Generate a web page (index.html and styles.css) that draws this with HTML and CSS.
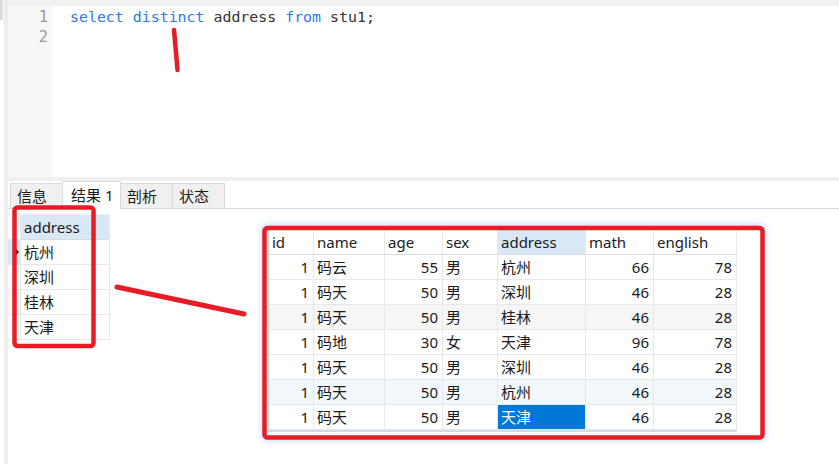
FILE: index.html
```html
<!DOCTYPE html>
<html lang="zh-CN">
<head>
<meta charset="utf-8">
<title>query</title>
<link rel="stylesheet" href="styles.css">
</head>
<body>
<div class="app">
  <div class="side"><div class="thumb"></div></div>
  <div class="main">
    <div class="topbar"></div>
    <div class="editor">
      <div class="gutter"><div class="ln">1</div><div class="ln">2</div></div>
      <div class="code">
        <div class="line"><span class="kw">select</span> <span class="kw">distinct</span> address <span class="kw">from</span> stu1;</div>
        <div class="line">&nbsp;</div>
      </div>
    </div>
    <div class="sep"></div>
    <div class="tabs">
      <div class="tab">信息</div>
      <div class="tab active">结果 1</div>
      <div class="tab">剖析</div>
      <div class="tab">状态</div>
    </div>
    <div class="results">
      <div class="grid small">
        <div class="c ind"></div><div class="c hd sel">address</div>
        <div class="c ind cur"><span class="tri"></span></div><div class="c">杭州</div>
        <div class="c ind"></div><div class="c">深圳</div>
        <div class="c ind alt"></div><div class="c">桂林</div>
        <div class="c ind"></div><div class="c">天津</div>
      </div>
    </div>
  </div>

  <div class="snap">
    <div class="grid big">
      <div class="c hd">id</div><div class="c hd">name</div><div class="c hd">age</div><div class="c hd">sex</div><div class="c hd sel">address</div><div class="c hd">math</div><div class="c hd">english</div>

      <div class="c n">1</div><div class="c">码云</div><div class="c n">55</div><div class="c">男</div><div class="c">杭州</div><div class="c n">66</div><div class="c n">78</div>

      <div class="c n">1</div><div class="c">码天</div><div class="c n">50</div><div class="c">男</div><div class="c">深圳</div><div class="c n">46</div><div class="c n">28</div>

      <div class="c n alt">1</div><div class="c alt">码天</div><div class="c n alt">50</div><div class="c alt">男</div><div class="c alt">桂林</div><div class="c n alt">46</div><div class="c n alt">28</div>

      <div class="c n">1</div><div class="c">码地</div><div class="c n">30</div><div class="c">女</div><div class="c">天津</div><div class="c n">96</div><div class="c n">78</div>

      <div class="c n">1</div><div class="c">码天</div><div class="c n">50</div><div class="c">男</div><div class="c">深圳</div><div class="c n">46</div><div class="c n">28</div>

      <div class="c n hov">1</div><div class="c hov">码天</div><div class="c n hov">50</div><div class="c hov">男</div><div class="c hov">杭州</div><div class="c n hov">46</div><div class="c n hov">28</div>

      <div class="c n">1</div><div class="c">码天</div><div class="c n">50</div><div class="c">男</div><div class="c picked">天津</div><div class="c n">46</div><div class="c n">28</div>
    </div>
  </div>

  <svg class="marks" width="839" height="464" viewBox="0 0 839 464">
    <line x1="174" y1="30" x2="177.5" y2="70" class="pen"/>
    <rect x="14.5" y="207.5" width="79" height="138.5" rx="3" class="pen"/>
    <line x1="117" y1="287" x2="244" y2="314" class="pen thick"/>
    <rect x="264.5" y="228" width="498" height="209.5" rx="3" class="pen"/>
  </svg>
</div>
</body>
</html>
```

FILE: styles.css
```css
html, body {
  margin: 0;
  padding: 0;
  background: #fff;
}

.app {
  position: relative;
  width: 839px;
  height: 464px;
  overflow: hidden;
  display: flex;
  font-family: "Noto Sans", "Noto Sans CJK SC", sans-serif;
  color: #1a1a1a;
}

.side {
  width: 8px;
  flex: none;
  background: linear-gradient(to right, #ffffff 0 4px, #eeeeee 4px 8px);
}

.thumb {
  width: 3px;
  height: 20px;
  background: #dcdcdc;
}

.main {
  flex: 1;
  display: flex;
  flex-direction: column;
}

.topbar {
  height: 6px;
  background: #f0f0f0;
}

.editor {
  height: 171px;
  display: flex;
  background: #fff;
}

.gutter {
  width: 44px;
  background: #f7f7f7;
  padding-top: 1px;
  box-sizing: border-box;
}

.ln {
  height: 20px;
  line-height: 20px;
  text-align: right;
  padding-right: 4px;
  font-family: "DejaVu Sans Mono", monospace;
  font-size: 15.5px;
  color: #9a9a9a;
}

.code {
  padding: 1px 0 0 18px;
}

.line {
  height: 20px;
  line-height: 20px;
  font-family: "DejaVu Sans Mono", monospace;
  font-size: 14.9px;
  color: #333;
  white-space: pre;
}

.kw {
  color: #2b7be0;
}

.sep {
  height: 4px;
  background: #f0f0f0;
}

.tabs {
  height: 27px;
  display: flex;
  align-items: flex-end;
  padding-left: 2px;
  border-bottom: 1px solid #dadada;
}

.tab {
  box-sizing: border-box;
  height: 25px;
  width: 53px;
  padding-left: 6px;
  background: #f0f0f0;
  border: 1px solid #d9d9d9;
  border-bottom: none;
  margin-left: -1px;
  font-size: 15px;
  line-height: 24px;
  color: #1a1a1a;
}

.tab:first-child {
  margin-left: 0;
}

.tab.active {
  height: 28px;
  width: 59px;
  margin-bottom: -1px;
  background: #fff;
  padding-left: 8px;
  line-height: 26px;
  position: relative;
}

.results {
  padding-top: 5px;
}

.grid {
  display: grid;
  font-size: 15px;
}

.grid.small {
  grid-template-columns: 13px 89px;
  width: 102px;
  border-top: 1px solid #ececec;
}

.c {
  box-sizing: border-box;
  height: 25px;
  line-height: 24px;
  padding: 0 3px;
  border-right: 1px solid #e8e8e8;
  border-bottom: 1px solid #e8e8e8;
  background: #fff;
  white-space: nowrap;
  overflow: hidden;
}

.c.hd {
  border-bottom-color: #dcdcdc;
}

.c.sel {
  background: #d9e8f6;
}

.c.ind {
  padding: 0;
  position: relative;
}

.c.ind.cur {
  background: #d9e8f6;
}

.c.alt {
  background: #f6f6f6;
}

.tri {
  position: absolute;
  left: 8px;
  top: 9px;
  width: 0;
  height: 0;
  border-top: 3px solid transparent;
  border-bottom: 3px solid transparent;
  border-left: 3px solid #000;
}

.snap {
  position: absolute;
  left: 264px;
  top: 227px;
  width: 499px;
  height: 211px;
  background: #fff;
  box-shadow: 0 0 7px 1px rgba(80, 150, 235, 0.5);
  padding: 3px 0 0 3px;
  box-sizing: border-box;
}

.grid.big {
  grid-template-columns: 45px 71px 58px 55px 88px 68px 83px;
  width: 468px;
  border-left: 2px solid #e4e4e4;
  border-bottom: 2px solid #d3dae4;
}

.c.n {
  text-align: right;
  padding-right: 4px;
}

.c.hov {
  background: #f3f8fd;
}

.c.picked {
  background: #0078d7;
  color: #fff;
}

.marks {
  position: absolute;
  left: 0;
  top: 0;
  pointer-events: none;
}

.pen {
  fill: none;
  stroke: #e81c24;
  stroke-width: 4.5;
  stroke-linecap: round;
  stroke-linejoin: round;
}

.pen.thick {
  stroke-width: 5;
}
```
